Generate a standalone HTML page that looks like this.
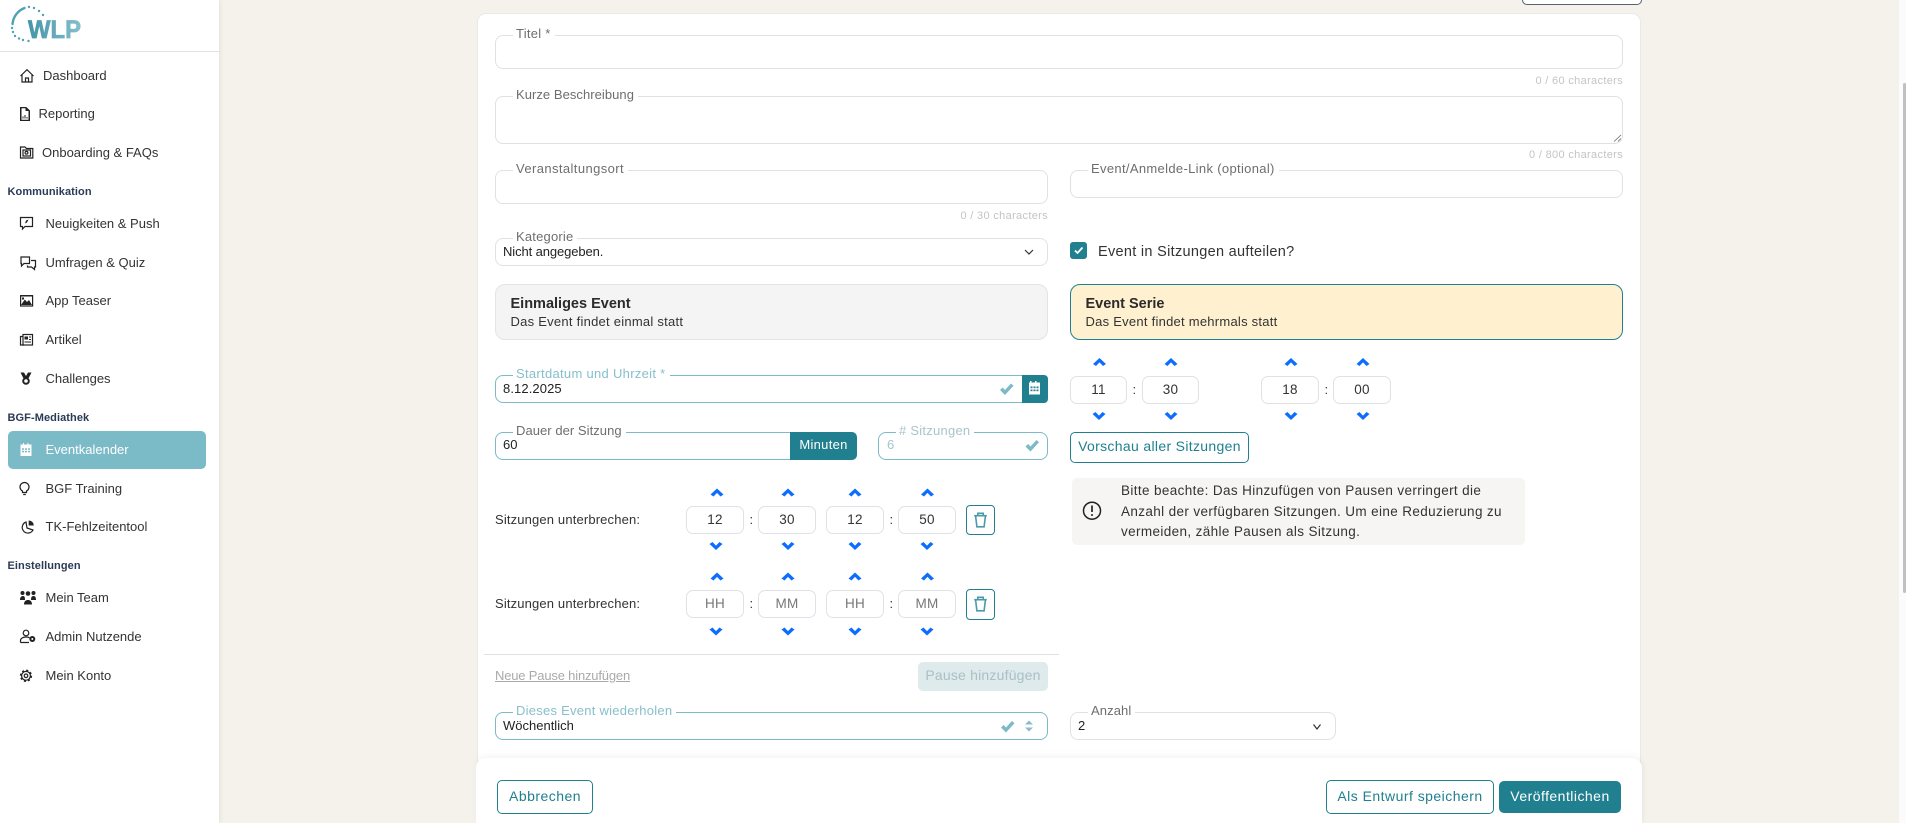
<!DOCTYPE html>
<html lang="de"><head><meta charset="utf-8"><title>Event</title>
<style>
html{margin:0;padding:0;width:1906px;height:823px;overflow:hidden;background:#f5f2ec}
body{margin:0;padding:0;width:1906px;height:823px;overflow:hidden;position:relative;background:#f5f2ec;font-family:"Liberation Sans",sans-serif;color:#333}
*{box-sizing:border-box}
.a{position:absolute}
.t{position:absolute;white-space:nowrap;line-height:16px;font-size:13px;letter-spacing:.15px}
.n{color:#333;letter-spacing:0}
.h{color:#2b3a55;font-weight:bold;font-size:11px;letter-spacing:.08px}
.f{position:absolute;border:1px solid #e0e1e8;border-radius:8px;background:#fff}
.g{border-color:#7bbac7}
.l{position:absolute;white-space:nowrap;line-height:16px;font-size:13px;background:#fff;padding:0 4px 0 3px;color:#6e6e6e;letter-spacing:.1px}
.lg{color:#86c0cc;letter-spacing:.3px}
.c{position:absolute;white-space:nowrap;line-height:14px;font-size:11px;color:#c4c4c4;text-align:right;letter-spacing:.33px}
.v{color:#222;letter-spacing:0}
.b{position:absolute;border:1px solid #e0e1e8;border-radius:7px;text-align:center;line-height:26px;font-size:13.5px;color:#333;background:#fff;letter-spacing:.3px}
.p{color:#777}
.btn{position:absolute;border:1px solid #20808f;border-radius:5px;text-align:center;color:#20808f;font-size:14px;background:#fff;letter-spacing:.47px;white-space:nowrap}
.tr{position:absolute;border:1px solid #20808f;border-radius:4px;background:#fff}
.ti{font-size:14.500px;font-weight:bold;color:#2b2b2b;letter-spacing:0}
.nt{font-size:13.500px;letter-spacing:.37px;color:#333}
</style></head><body>

<!-- sidebar -->
<div class="a" style="left:0;top:0;width:219px;height:823px;background:#fff;box-shadow:1px 0 5px rgba(0,0,0,.08)"></div>
<div class="a" style="left:0;top:51px;width:219px;height:1px;background:#e2e2e2"></div>
<div class="a" style="left:8px;top:431px;width:198px;height:38px;background:#7bbac7;border-radius:5px"></div>

<span class="t n" style="left:43px;top:68px">Dashboard</span>
<span class="t n" style="left:38.500px;top:106px">Reporting</span>
<span class="t n" style="left:42px;top:145px">Onboarding &amp; FAQs</span>
<span class="t h" style="left:7.500px;top:184px">Kommunikation</span>
<span class="t n" style="left:45.500px;top:216px">Neuigkeiten &amp; Push</span>
<span class="t n" style="left:45.500px;top:255px">Umfragen &amp; Quiz</span>
<span class="t n" style="left:45.500px;top:293px">App Teaser</span>
<span class="t n" style="left:45.500px;top:332px">Artikel</span>
<span class="t n" style="left:45.500px;top:371px">Challenges</span>
<span class="t h" style="left:7.500px;top:410px">BGF-Mediathek</span>
<span class="t n" style="left:45.500px;top:442px;color:#fff">Eventkalender</span>
<span class="t n" style="left:45.500px;top:481px">BGF Training</span>
<span class="t n" style="left:45.500px;top:519px">TK-Fehlzeitentool</span>
<span class="t h" style="left:7.500px;top:558px">Einstellungen</span>
<span class="t n" style="left:45.500px;top:590px">Mein Team</span>
<span class="t n" style="left:45.500px;top:629px">Admin Nutzende</span>
<span class="t n" style="left:45.500px;top:668px">Mein Konto</span>

<!-- scrollbar -->
<div class="a" style="left:1899px;top:0;width:7px;height:823px;background:#fbfbfb"></div>
<div class="a" style="left:1903px;top:83px;width:3px;height:510px;background:#c0c0c0;border-radius:2px"></div>

<!-- top button stub -->
<div class="a" style="left:1521.500px;top:0;width:120px;height:5px;border:1px solid #5a6270;border-top:0;border-radius:0 0 5px 5px;background:#fff"></div>

<!-- card -->
<div class="a" style="left:477px;top:13px;width:1164px;height:810px;background:#fff;border:1px solid #e9e8ea;border-bottom:0;border-radius:9px 9px 0 0"></div>

<!-- Titel -->
<div class="f" style="left:495px;top:35px;width:1128px;height:34px"></div>
<span class="l" style="left:513px;top:26px;letter-spacing:.25px">Titel *</span>
<span class="c" style="left:1423px;width:200px;top:74px">0 / 60 characters</span>

<!-- Beschreibung -->
<div class="f" style="left:495px;top:96px;width:1128px;height:47.500px"></div>
<span class="l" style="left:513px;top:87px;letter-spacing:.05px">Kurze Beschreibung</span>
<span class="c" style="left:1423px;width:200px;top:147.500px">0 / 800 characters</span>

<!-- Ort / Link -->
<div class="f" style="left:495px;top:170px;width:553px;height:34px"></div>
<span class="l" style="left:513px;top:161px;letter-spacing:.4px">Veranstaltungsort</span>
<span class="c" style="left:848px;width:200px;top:208.500px">0 / 30 characters</span>
<div class="f" style="left:1070px;top:170px;width:553px;height:28px"></div>
<span class="l" style="left:1088px;top:161px;letter-spacing:.33px">Event/Anmelde-Link (optional)</span>

<!-- Kategorie / checkbox -->
<div class="f" style="left:495px;top:238px;width:553px;height:28px"></div>
<span class="l" style="left:513px;top:229px;letter-spacing:.2px">Kategorie</span>
<span class="t v" style="left:503px;top:244px;letter-spacing:-.1px">Nicht angegeben.</span>
<div class="a" style="left:1070px;top:242px;width:17px;height:17px;background:#20808f;border-radius:3px"></div>
<span class="t" style="left:1098px;top:243.500px;font-size:14.500px;color:#333;letter-spacing:.3px">Event in Sitzungen aufteilen?</span>

<!-- Event types -->
<div class="a" style="left:495px;top:284px;width:553px;height:56px;background:#f4f4f4;border:1px solid #e4e4e6;border-radius:10px"></div>
<span class="t ti" style="left:510.500px;top:296px">Einmaliges Event</span>
<span class="t" style="left:510.500px;top:314px;color:#333;letter-spacing:.25px">Das Event findet einmal statt</span>
<div class="a" style="left:1070px;top:284px;width:553px;height:56px;background:#fff1cf;border:1px solid #20808f;border-radius:10px"></div>
<span class="t ti" style="left:1085.500px;top:296px">Event Serie</span>
<span class="t" style="left:1085.500px;top:314px;color:#333;letter-spacing:.25px">Das Event findet mehrmals statt</span>

<!-- Startdatum -->
<div class="f g" style="left:495px;top:375px;width:553px;height:28px"></div>
<div class="a" style="left:1022px;top:375px;width:26px;height:28px;background:#20808f;border-radius:0 4px 4px 0"></div>
<span class="l lg" style="left:513px;top:366px">Startdatum und Uhrzeit *</span>
<span class="t v" style="left:503px;top:381px;letter-spacing:.1px">8.12.2025</span>

<!-- time right -->
<div class="b" style="left:1070px;top:376px;width:57px;height:28px">11</div>
<div class="b" style="left:1142px;top:376px;width:57px;height:28px">30</div>
<div class="b" style="left:1261px;top:376px;width:58px;height:28px">18</div>
<div class="b" style="left:1333px;top:376px;width:58px;height:28px">00</div>
<span class="t" style="left:1132.500px;top:382px">:</span>
<span class="t" style="left:1324.500px;top:382px">:</span>

<!-- Dauer -->
<div class="f g" style="left:495px;top:432px;width:362px;height:28px"></div>
<div class="a" style="left:790px;top:432px;width:67px;height:28px;background:#20808f;border-radius:0 5px 5px 0;color:#fff;font-size:13px;line-height:26px;text-align:center;letter-spacing:.3px">Minuten</div>
<span class="l" style="left:513px;top:423px;letter-spacing:.05px">Dauer der Sitzung</span>
<span class="t v" style="left:503px;top:437px">60</span>
<div class="f g" style="left:878px;top:432px;width:170px;height:28px"></div>
<span class="l" style="left:896px;top:423px;color:#a9c4cb;letter-spacing:.25px"># Sitzungen</span>
<span class="t" style="left:887px;top:437px;color:#a3c5cc">6</span>

<!-- Vorschau -->
<div class="btn" style="left:1070px;top:432px;width:179px;height:31px;line-height:27px;letter-spacing:.33px">Vorschau aller Sitzungen</div>

<!-- notice -->
<div class="a" style="left:1072px;top:478px;width:453px;height:67px;background:#f6f5f3;border-radius:5px"></div>
<span class="t nt" style="left:1121px;top:483px">Bitte beachte: Das Hinzufügen von Pausen verringert die</span>
<span class="t nt" style="left:1121px;top:504px">Anzahl der verfügbaren Sitzungen. Um eine Reduzierung zu</span>
<span class="t nt" style="left:1121px;top:524px">vermeiden, zähle Pausen als Sitzung.</span>

<!-- pause rows -->
<span class="t" style="left:495px;top:512px;color:#333">Sitzungen unterbrechen:</span>
<div class="b" style="left:686px;top:506px;width:58px;height:28px">12</div>
<span class="t" style="left:749.500px;top:512px">:</span>
<div class="b" style="left:758px;top:506px;width:58px;height:28px">30</div>
<div class="b" style="left:826px;top:506px;width:58px;height:28px">12</div>
<span class="t" style="left:889.500px;top:512px">:</span>
<div class="b" style="left:898px;top:506px;width:58px;height:28px">50</div>
<div class="tr" style="left:966px;top:505px;width:29px;height:30px"></div>

<span class="t" style="left:495px;top:596px;color:#333">Sitzungen unterbrechen:</span>
<div class="b p" style="left:686px;top:590px;width:58px;height:28px">HH</div>
<span class="t" style="left:749.500px;top:596px">:</span>
<div class="b p" style="left:758px;top:590px;width:58px;height:28px">MM</div>
<div class="b p" style="left:826px;top:590px;width:58px;height:28px">HH</div>
<span class="t" style="left:889.500px;top:596px">:</span>
<div class="b p" style="left:898px;top:590px;width:58px;height:28px">MM</div>
<div class="tr" style="left:966px;top:589px;width:29px;height:31px"></div>

<div class="a" style="left:484px;top:654px;width:575px;height:1px;background:#e0e0e8"></div>
<span class="t" style="left:495px;top:668px;color:#aaa;text-decoration:underline;letter-spacing:-.18px">Neue Pause hinzufügen</span>
<div class="a" style="left:918px;top:662px;width:130px;height:29px;background:#deeaec;border-radius:5px;color:#a9c0c4;font-size:14px;line-height:27px;text-align:center;letter-spacing:.2px">Pause hinzufügen</div>

<!-- repeat -->
<div class="f g" style="left:495px;top:712px;width:553px;height:28px"></div>
<span class="l lg" style="left:513px;top:703px;letter-spacing:.25px">Dieses Event wiederholen</span>
<span class="t v" style="left:503px;top:718px">Wöchentlich</span>
<div class="f" style="left:1070px;top:712px;width:266px;height:27.500px"></div>
<span class="l" style="left:1088px;top:703px">Anzahl</span>
<span class="t v" style="left:1078px;top:718px">2</span>

<!-- footer -->
<div class="a" style="left:476px;top:758px;width:1166px;height:65px;background:#fff;border-radius:10px 10px 0 0;box-shadow:0 -3px 8px rgba(0,0,0,.03),2px 0 4px rgba(0,0,0,.03)"></div>
<div class="btn" style="left:497px;top:780px;width:96px;height:34px;line-height:31px">Abbrechen</div>
<div class="btn" style="left:1326px;top:780px;width:168px;height:34px;line-height:31px">Als Entwurf speichern</div>
<div class="btn" style="left:1499px;top:781px;width:122px;height:32px;line-height:29px;background:#20808f;color:#fff">Veröffentlichen</div>

<!-- icons -->
<svg class="a" style="left:0;top:0" width="1906" height="823" viewBox="0 0 1906 823">
<defs>
<path id="up" d="M0 6 L6.500 0 L13 6 L10 8 L6.500 4.400 L3 8Z" fill="#0d6efd"/>
<path id="dn" d="M0 2 L3 0 L6.500 3.600 L10 0 L13 2 L6.500 8Z" fill="#0d6efd"/>
<path id="ck" d="M0 6.500 L2.600 4 L5 6.500 L11 0 L13.500 2.200 L5 11.500Z"/>
<g id="tb" fill="none" stroke="#4b9aa9" stroke-width="1.600"><path d="M.2 3.200H12.800"/><path d="M3.800 3V.8H9.200V3"/><path d="M1.600 3.500 L2.900 14.300H10.100L11.400 3.500"/></g>
<linearGradient id="lg" x1="0" x2="1"><stop offset="0" stop-color="#4494a8"/><stop offset="1" stop-color="#86bfcc"/></linearGradient>
</defs>

<!-- logo -->
<path d="M12.500 24 A19 19 0 0 1 24.500 8" fill="none" stroke="#4ea2b3" stroke-width="2.400" stroke-linecap="round"/>
<g fill="#4ea2b3"><circle cx="29" cy="7" r="1.200"/><circle cx="34" cy="8" r="1.200"/><circle cx="39" cy="11" r="1.200"/><circle cx="43" cy="15" r="1.200"/><circle cx="12" cy="28" r="1.200"/><circle cx="13" cy="32" r="1.200"/><circle cx="15" cy="36" r="1.200"/><circle cx="19" cy="38.500" r="1.200"/><circle cx="23" cy="40" r="1.200"/><circle cx="28.500" cy="41" r="1.200"/></g>
<text x="28" y="38" font-family="Liberation Sans" font-size="25" font-weight="bold" fill="url(#lg)" stroke="url(#lg)" stroke-width=".7" textLength="53" lengthAdjust="spacingAndGlyphs">WLP</text>

<!-- nav icons -->
<g fill="none" stroke="#222" stroke-width="1.200">
<path d="M20.500 76 L27 69.700 L33.500 76 M22 75V82H32V75 M25.500 82V78H28.500V82"/>
<path d="M20.500 147H25L26.500 148.500H32.800V158H20.500Z"/><rect x="23" y="150" width="7.500" height="6"/><circle cx="26.500" cy="152.800" r="1.400"/>
<path d="M20.500 217.500H32.500V226.500H25L22.500 229V226.500H20.500Z"/>
<path d="M21 257H29.500V263.500H24L21.500 266V263.500H21Z"/><path d="M31 260.500H35.500V267H34.500V269.500L31.500 267H27.500V265.500"/>
<rect x="20.600" y="295.700" width="12" height="10.300"/>
<rect x="23" y="334.500" width="9.500" height="10.500"/><path d="M23 336.500H20.500V345H24"/>
<circle cx="26" cy="381" r="2.800" stroke-width="2"/>
<path d="M22.500 491 A4.500 4.500 0 1 1 26.500 491 V492.500 H22.500Z M23.200 494.500H25.800"/>
<path d="M26 522 A5.700 5.700 0 1 0 33 530 L27 528Z"/>
<circle cx="26" cy="633" r="2.800"/><path d="M20.500 642.500V640.500C20.500 638.500 23 637 26 637 S29 637.500 29.500 638M20.500 642.500H29"/>
<circle cx="26" cy="675.800" r="4.400"/>
<circle cx="26" cy="675.800" r="5.400" stroke-width="1.500" stroke-dasharray="2.100 2.140"/><circle cx="26" cy="675.800" r="1.800"/>
</g>
<path d="M28.700 520.500 A5 5 0 0 1 33.800 525.500H28.700Z" fill="#222"/>
<path d="M20 121V107H26.300L30 110.500V121ZM21.500 119.800H28.500V111H25.500V108.300H21.500Z M22.500 118.500h1v-2h-1zM24.500 118.500h1v-3.500h-1zM26.500 118.500h1v-1.500h-1z" fill="#222" fill-rule="evenodd"/>
<path d="M26 220.500 L28.500 219.500 L27 222.500 L25 223.500Z" fill="#222"/>
<path d="M21 305 L24.800 299.500 L27 302 L29 300 L32 305 Z M22 297.500h2v2h-2z" fill="#222"/>
<rect x="20.500" y="295" width="12.500" height="1.500" fill="#222"/>
<path d="M24.500 336.500h3.500v3h-3.500zM29 336.500h2v1h-2zM29 339h2v1h-2zM24.500 341.500h6.500v1h-6.500z" fill="#222"/>
<path d="M20.500 372.500H24L26 376 L28 372.500H31.500L28.700 378H23.300Z" fill="#222"/>
<path d="M22 444.500H23V443H24V444.500H27.500V443H28.500V444.500H31.500V456H20.500V444.500Z" fill="#fff"/>
<g fill="#7bbac7"><rect x="22" y="448.300" width="2" height="1.500"/><rect x="25" y="448.300" width="2" height="1.500"/><rect x="28" y="448.300" width="2" height="1.500"/><rect x="22" y="450.800" width="2" height="1.500"/><rect x="25" y="450.800" width="2" height="1.500"/><rect x="28" y="450.800" width="2" height="1.500"/></g>
<g fill="#222"><circle cx="28" cy="593.500" r="2.300"/><circle cx="22.500" cy="593" r="2"/><circle cx="33.500" cy="593" r="2"/><path d="M20 600C20 597 21.500 596 23 596S25 597 25 600ZM31 600C31 597 32 596 33.500 596S36 597 36 600ZM24 604.500C24 601 26 600 28 600S32 601 32 604.500Z"/>
<circle cx="32.300" cy="639" r="3"/></g>
<circle cx="32.300" cy="639" r="1" fill="#fff"/>

<!-- kategorie/anzahl chevrons -->
<g fill="none" stroke="#333" stroke-width="1.200"><path d="M1025 250 L1029 254 L1033 250"/><path d="M1313.500 724.500 L1317 729 L1320.500 724.500"/></g>

<!-- checkbox -->
<path d="M1075 250.500 L1077.500 253 L1082.500 247.500" fill="none" stroke="#fff" stroke-width="1.800"/>

<!-- calendar -->
<path d="M1029 382H1030V380.500H1031.500V382H1035V380.500H1036.500V382H1040V394H1029Z" fill="#fff" transform="translate(0 .5)"/>
<g fill="#20808f"><rect x="1030.500" y="386.500" width="2" height="1.700"/><rect x="1033.500" y="386.500" width="2" height="1.700"/><rect x="1036.500" y="386.500" width="2" height="1.700"/><rect x="1030.500" y="389.500" width="2" height="1.700"/><rect x="1033.500" y="389.500" width="2" height="1.700"/><rect x="1036.500" y="389.500" width="2" height="1.700"/></g>

<!-- checks -->
<g fill="#7bbac7"><use href="#ck" x="1000" y="383.500"/><use href="#ck" x="1025.500" y="440"/><use href="#ck" x="1001" y="721"/></g>
<path d="M1025 724.500 L1029 720.500 L1033 724.500ZM1025 727.500 L1029 731.500 L1033 727.500Z" fill="#8bbcc8"/>

<!-- notice icon -->
<circle cx="1092" cy="510.700" r="8.500" fill="none" stroke="#222" stroke-width="1.500"/>
<path d="M1092 505.500V512" stroke="#222" stroke-width="1.700"/><circle cx="1092" cy="515" r="1" fill="#222"/>

<!-- arrows right -->
<use href="#up" x="1093" y="358"/><use href="#up" x="1164.500" y="358"/><use href="#up" x="1284.500" y="358"/><use href="#up" x="1356.500" y="358"/>
<use href="#dn" x="1092.500" y="412"/><use href="#dn" x="1164.500" y="412"/><use href="#dn" x="1284.500" y="412"/><use href="#dn" x="1356.500" y="412"/>

<!-- arrows pause 1 -->
<use href="#up" x="710.500" y="488.500"/><use href="#up" x="781.500" y="488.500"/><use href="#up" x="848.500" y="488.500"/><use href="#up" x="921" y="488.500"/>
<use href="#dn" x="709.500" y="542"/><use href="#dn" x="781.500" y="542"/><use href="#dn" x="848.500" y="542"/><use href="#dn" x="920.500" y="542"/>
<!-- arrows pause 2 -->
<use href="#up" x="710.500" y="572.500"/><use href="#up" x="781.500" y="572.500"/><use href="#up" x="848.500" y="572.500"/><use href="#up" x="921" y="572.500"/>
<use href="#dn" x="709.500" y="627.500"/><use href="#dn" x="781.500" y="627.500"/><use href="#dn" x="848.500" y="627.500"/><use href="#dn" x="920.500" y="627.500"/>

<use href="#tb" x="974" y="512.500"/><use href="#tb" x="974" y="596.500"/>

<!-- textarea resizer -->
<path d="M1614 141.500 L1621 135M1618 141.500 L1621 138.500" stroke="#666" stroke-width=".8"/>
</svg>
</body></html>
